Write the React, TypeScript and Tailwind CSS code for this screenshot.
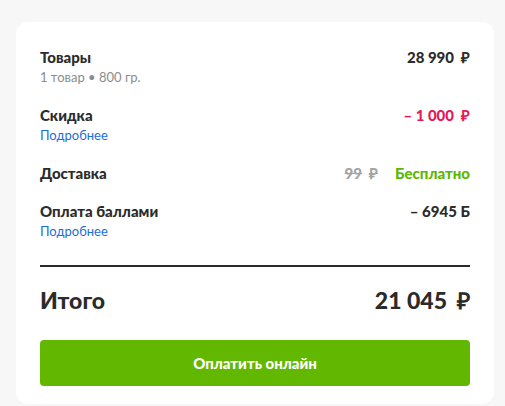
const Rub = () => <span className="ml-[7px]">₽</span>

export default function App() {
  return (
    <div className="min-h-[406px] bg-[#f7f7f7] pl-4 pr-[11px] pt-[22px] font-['Lato',sans-serif] text-[#2b2b2b]">
      <div className="rounded-xl bg-white px-6 pt-[25px] pb-[18px]">
        <div className="flex flex-col gap-[18px]">
          {/* Goods */}
          <div className="flex items-start justify-between">
            <div>
              <p className="text-[15px] font-black leading-5">Товары</p>
              <p className="text-[13px] leading-5 text-[#8c8c8c]">1 товар • 800 гр.</p>
            </div>
            <p className="text-[15px] font-black leading-5">28 990<Rub /></p>
          </div>

          {/* Discount */}
          <div className="flex items-start justify-between">
            <div>
              <p className="text-[15px] font-black leading-5">Скидка</p>
              <p className="text-[13px] leading-5 text-[#1a6fd8]">Подробнее</p>
            </div>
            <p className="text-[15px] font-black leading-5 text-[#e5195a]">– 1 000<Rub /></p>
          </div>

          {/* Delivery */}
          <div className="flex items-start justify-between">
            <p className="text-[15px] font-black leading-5">Доставка</p>
            <div className="flex gap-[17px] text-[15px] font-black leading-5">
              <span className="text-[#a3a3a3] line-through">99<Rub /></span>
              <span className="text-[#5cb800]">Бесплатно</span>
            </div>
          </div>

          {/* Points */}
          <div className="flex items-start justify-between">
            <div>
              <p className="text-[15px] font-black leading-5">Оплата баллами</p>
              <p className="text-[13px] leading-5 text-[#1a6fd8]">Подробнее</p>
            </div>
            <p className="text-[15px] font-black leading-5">– 6945 Б</p>
          </div>
        </div>

        <div className="mt-6 h-[2px] bg-[#2b2b2b]" />

        <div className="mt-[19px] flex items-center justify-between text-[23px] font-black leading-7">
          <span>Итого</span>
          <span>21 045<span className="ml-[10px]">₽</span></span>
        </div>

        <button className="mt-[26px] flex h-[46px] w-full items-center justify-center rounded bg-[#62b800] text-[15px] font-black text-white">
          Оплатить онлайн
        </button>
      </div>
    </div>
  )
}
